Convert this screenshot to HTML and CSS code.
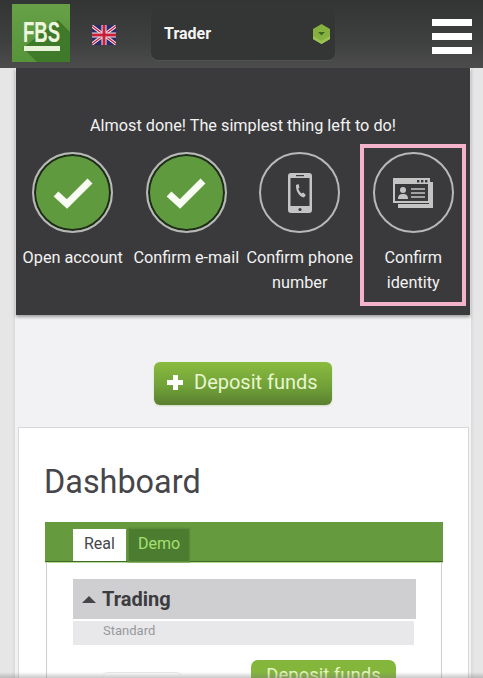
FILE: index.html
```html
<!DOCTYPE html>
<html lang="en">
<head>
  <meta charset="UTF-8">
  <title>FBS Dashboard</title>
  <link rel="stylesheet" href="styles.css">
</head>
<body>

  <header class="topbar">
    <div class="logo">
      <svg class="logo-shadow" viewBox="0 0 58 58"><path d="M11 44 L46 16 L58 28 L58 58 L25 58 Z" fill="#3f7a2a"/></svg>
      <span class="logo-text">FBS</span>
      <span class="logo-line"></span>
    </div>
    <svg class="flag" viewBox="0 0 24 20">
      <rect width="24" height="20" rx="2" fill="#2b2a6b"/>
      <path d="M0 1 L24 19 M24 1 L0 19" stroke="#efe6ec" stroke-width="3.2"/>
      <path d="M0 1 L24 19 M24 1 L0 19" stroke="#c8203c" stroke-width="1.2"/>
      <path d="M12 0 V20 M0 10 H24" stroke="#efe6ec" stroke-width="5"/>
      <path d="M12 0 V20 M0 10 H24" stroke="#c8203c" stroke-width="3"/>
    </svg>
    <div class="account-select">
      <span>Trader</span>
      <svg class="hex" viewBox="0 0 17 20">
        <path d="M8.5 0 L17 5 V15 L8.5 20 L0 15 V5 Z" fill="#86b040"/>
        <path d="M0 12 L8.5 17 L17 12 V15 L8.5 20 L0 15 Z" fill="#9cc256"/>
        <path d="M5 8 H12 L8.5 11.5 Z" fill="#3f6a22"/>
      </svg>
    </div>
    <div class="burger"><i></i><i></i><i></i></div>
  </header>

  <main class="column">
    <section class="steps-panel">
      <p class="steps-title">Almost done! The simplest thing left to do!</p>
      <div class="steps">
        <div class="step">
          <div class="circle done">
            <svg viewBox="0 0 40 32" class="check"><path d="M3 17 L14 27 L37 4" fill="none" stroke="#f8fcf2" stroke-width="7"/></svg>
          </div>
          <div class="step-label">Open account</div>
        </div>
        <div class="step">
          <div class="circle done">
            <svg viewBox="0 0 40 32" class="check"><path d="M3 17 L14 27 L37 4" fill="none" stroke="#f8fcf2" stroke-width="7"/></svg>
          </div>
          <div class="step-label">Confirm e-mail</div>
        </div>
        <div class="step">
          <div class="circle">
            <svg viewBox="0 0 24 40" class="phone">
              <rect width="24" height="40" rx="3" fill="#c4c4c4"/>
              <rect x="2.5" y="5" width="19" height="28" fill="#3a3a3c"/>
              <rect x="8" y="2" width="8" height="1.2" fill="#3a3a3c"/>
              <circle cx="12" cy="36.5" r="1.6" fill="#3a3a3c"/>
              <path d="M8 12 L10.5 11 L11.5 14.5 L10.3 15.6 C11 18 12.2 19.6 13.8 20.6 L15.2 19.6 L17.8 22 L16 24.5 C11.5 24 7.5 18 8 12 Z" fill="#c4c4c4"/>
            </svg>
          </div>
          <div class="step-label">Confirm phone number</div>
        </div>
        <div class="step marked">
          <div class="circle">
            <svg viewBox="0 0 40 30" class="id-card">
              <path d="M36 4 H40 V30 H5 V26 H36 Z" fill="#c4c4c4"/>
              <rect x="0" y="0" width="37" height="25" fill="#c4c4c4"/>
              <rect x="2" y="6" width="33" height="17" fill="#3a3a3c"/>
              <rect x="24" y="2" width="2.4" height="2.4" fill="#3a3a3c"/>
              <rect x="28" y="2" width="2.4" height="2.4" fill="#3a3a3c"/>
              <rect x="32" y="2" width="2.4" height="2.4" fill="#3a3a3c"/>
              <circle cx="10" cy="12" r="3" fill="#c4c4c4"/>
              <path d="M5 21 C5 17 7 16 10 16 C13 16 15 17 15 21 Z" fill="#c4c4c4"/>
              <path d="M18 11 H32 M18 15 H32 M18 19 H32" stroke="#c4c4c4" stroke-width="1.4"/>
            </svg>
          </div>
          <div class="step-label">Confirm identity</div>
        </div>
      </div>
    </section>

    <div class="deposit-row">
      <button class="btn-deposit"><span class="plus"></span>Deposit funds</button>
    </div>

    <section class="card">
      <h1>Dashboard</h1>
      <div class="tabs">
        <div class="tab active">Real</div>
        <div class="tab">Demo</div>
      </div>
      <div class="tab-body">
        <div class="group-head"><span class="arrow"></span>Trading</div>
        <div class="group-row">Standard</div>
        <div class="account-row">
          <div class="account-pill"></div>
          <button class="btn-small">Deposit funds</button>
        </div>
      </div>
    </section>
  </main>

  <div class="bottom-shade"></div>

</body>
</html>
```

FILE: styles.css
```css
* {
  box-sizing: border-box;
}

html, body {
  height: 678px;
  overflow: hidden;
}

body {
  margin: 0;
  font-family: Roboto, "Liberation Sans", sans-serif;
  background-color: #e6e6e6;
  position: relative;
}

.topbar {
  position: relative;
  height: 68px;
  display: flex;
  align-items: flex-start;
  background: linear-gradient(#333434, #3e3f3f 60%, #4c4c4c);
}

.logo {
  position: relative;
  width: 58px;
  height: 58px;
  margin: 4px 0 0 12px;
  background: linear-gradient(#67a047, #56943a);
  overflow: hidden;
}

.logo-shadow {
  position: absolute;
  inset: 0;
}

.logo-text {
  position: absolute;
  left: 11px;
  top: 14px;
  font-family: "Liberation Sans", sans-serif;
  font-size: 29px;
  line-height: 29px;
  font-weight: bold;
  color: #eef6e0;
  transform: scaleX(0.64);
  transform-origin: left;
}

.logo-line {
  position: absolute;
  left: 12px;
  top: 42px;
  width: 36px;
  height: 5px;
  background: #e8f2d8;
}

.flag {
  width: 24px;
  height: 20px;
  margin: 25px 0 0 22px;
}

.account-select {
  width: 184px;
  height: 53px;
  margin: 7px 0 0 35px;
  padding: 0 5px 0 13px;
  display: flex;
  align-items: center;
  justify-content: space-between;
  background: #343535;
  border-radius: 7px;
  box-shadow: 0 1px 1px #555;
  color: #f4f4f4;
  font-size: 16px;
  font-weight: bold;
}

.hex {
  width: 17px;
  height: 20px;
}

.burger {
  width: 40px;
  margin: 19px 0 0 97px;
  display: flex;
  flex-direction: column;
  gap: 7px;
}

.burger i {
  display: block;
  height: 7px;
  background: #fff;
}

.column {
  width: 454px;
  margin-left: 16px;
  background: #f2f2f4;
  box-shadow: 0 0 0 1px #f4f4f4, 0 0 4px 1px rgba(0, 0, 0, 0.12);
}

.steps-panel {
  height: 247px;
  padding-top: 48px;
  background: #3a3a3c;
  box-shadow: 0 2px 3px rgba(0, 0, 0, 0.35);
}

.steps-title {
  margin: 0 0 14px;
  text-align: center;
  font-size: 16.25px;
  line-height: 20px;
  color: #f2f2f2;
}

.steps {
  display: grid;
  grid-template-columns: repeat(4, 1fr);
}

.step {
  position: relative;
  padding-top: 2px;
  text-align: center;
}

.circle {
  width: 81px;
  height: 81px;
  margin: 0 auto;
  display: flex;
  align-items: center;
  justify-content: center;
  border: 2.5px solid #b8b8b8;
  border-radius: 50%;
}

.circle.done {
  background: #609a3f;
  box-shadow: inset 0 0 0 2px #1f2a1c;
}

.check {
  width: 40px;
  height: 32px;
}

.phone {
  width: 24px;
  height: 40px;
}

.id-card {
  width: 40px;
  height: 30px;
}

.step-label {
  margin-top: 12px;
  padding: 0 3px;
  font-size: 16.25px;
  line-height: 25px;
  color: #f2f2f2;
}

.step.marked::after {
  content: "";
  position: absolute;
  left: 3px;
  right: 4px;
  top: -6px;
  height: 154px;
  border: 4.5px solid #f2b3cb;
}

.deposit-row {
  height: 112px;
  padding-top: 47px;
  display: flex;
  justify-content: center;
}

.btn-deposit {
  width: 178px;
  height: 43px;
  padding: 0 0 3px 13px;
  display: flex;
  align-items: center;
  gap: 11px;
  border: none;
  border-radius: 6px;
  background: linear-gradient(#8abb3e, #6f9f38 60%, #5a7f30);
  box-shadow: 0 1px 2px rgba(130, 170, 60, 0.35);
  font-family: Roboto, "Liberation Sans", sans-serif;
  font-size: 20px;
  color: #e8f6cf;
}

.plus {
  width: 16px;
  height: 15px;
  background:
    linear-gradient(#fff, #fff) center / 16px 5px no-repeat,
    linear-gradient(#fff, #fff) center / 5px 15px no-repeat;
}

.card {
  margin: 0 1px 0 2px;
  height: 260px;
  padding: 0 25px 0 26px;
  background: #fff;
  border: 1px solid #d8d8d8;
  border-bottom: none;
}

h1 {
  margin: 0 0 0 -1px;
  padding-top: 34px;
  height: 94px;
  font-size: 32.4px;
  line-height: 40px;
  font-weight: normal;
  color: #46464a;
}

.tabs {
  height: 40px;
  padding: 7px 0 0 30px;
  display: flex;
  gap: 3px;
  background: #669a3f;
  border-bottom: 1px solid #3f6a2a;
  box-shadow: 0 1px 0 #b5dc90;
}

.tab {
  height: 32px;
  line-height: 30px;
  padding: 0 9px;
  font-size: 16px;
  color: #a6e070;
  background: #4c7c30;
  box-shadow: 0 0 0 1.5px #5a8c3a;
}

.tab.active {
  width: 51px;
  background: #fff;
  color: #46464a;
  box-shadow: -2px 0 0 #fff;
}

.tab-body {
  margin: 0 1px;
  height: 130px;
  padding: 17px 25px 0 26px;
  border: 1px solid #cfcfd2;
  border-top: none;
}

.group-head {
  height: 40px;
  padding-left: 9px;
  display: flex;
  align-items: center;
  gap: 6px;
  background: #cfcfd1;
  font-size: 20px;
  font-weight: bold;
  color: #3c3c40;
}

.arrow {
  width: 0;
  height: 0;
  border-left: 7px solid transparent;
  border-right: 7px solid transparent;
  border-bottom: 7px solid #46464a;
}

.group-row {
  width: 341px;
  height: 24px;
  margin-top: 2px;
  padding-left: 30px;
  line-height: 20px;
  background: #e8e8ea;
  font-size: 13px;
  color: #98989c;
}

.account-row {
  margin-top: 15px;
  display: flex;
  align-items: flex-start;
}

.account-pill {
  width: 80px;
  height: 20px;
  margin: 12px 0 0 29px;
  background: #fff;
  border-top: 1px solid #e8e8e8;
  border-radius: 6px;
}

.btn-small {
  width: 145px;
  height: 30px;
  margin-left: 69px;
  padding: 0;
  border: none;
  border-radius: 7px 7px 0 0;
  background: #84b63c;
  font-family: Roboto, "Liberation Sans", sans-serif;
  font-size: 18.5px;
  color: #e4f5c4;
  text-align: center;
}

.bottom-shade {
  position: absolute;
  left: 0;
  right: 0;
  bottom: 0;
  height: 6px;
  background: linear-gradient(rgba(120, 120, 120, 0), rgba(120, 120, 120, 0.4));
}
```
